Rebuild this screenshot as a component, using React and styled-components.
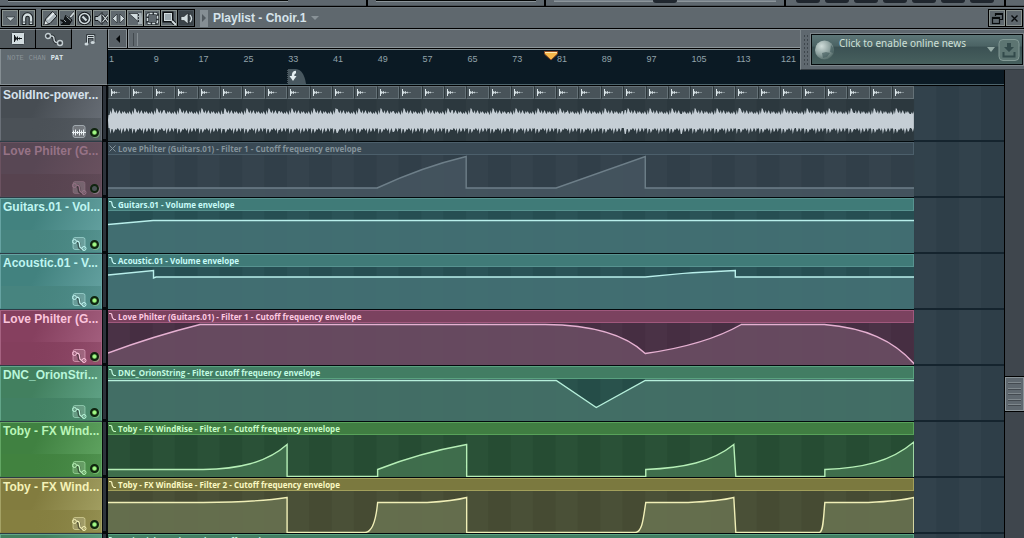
import React, { useState } from 'react'
import styled, { createGlobalStyle, css } from 'styled-components'

const GlobalStyle = createGlobalStyle`
* {
    box-sizing: border-box;
}
body {
    margin: 0;
    background: #2d3c46;
    overflow: hidden;
}
button {
    margin: 0;
    padding: 0;
    border: 0;
    background: none;
    color: inherit;
    font: inherit;
}
svg {
    display: block;
}
`

const Window = styled.div`
display: flex;
flex-direction: column;
height: 100vh;
overflow: hidden;
position: relative;
font-family: 'Liberation Sans', Arial, sans-serif;
`

const HostStrip = styled.div`
display: flex;
gap: 2px;
height: 7px;
flex: none;
background: #000;
border-bottom: 1px solid #000;
`

const HostPanel = styled.div`
flex: ${props => props.$grow} 1 0;
display: flex;
justify-content: space-around;
padding: 0 8px;
background: #5e676e;
border-bottom: 1px solid #4a5258;
`

const HostDisplay = styled.div`
flex: ${props => props.$grow || 1};
height: 2px;
background: ${props => props.$color || '#050808'};
border-bottom: 1px solid ${props => props.$edge || '#8b9499'};
`

const HostKey = styled.div`
width: 24px;
height: 3px;
border-radius: 0 0 4px 4px;
background: #20272f;
`

const Toolbar = styled.header`
display: flex;
align-items: center;
gap: 5px;
height: 22px;
flex: none;
padding: 0 1px;
background: #5f686e;
border-top: 1px solid #6b747a;
border-bottom: 1px solid #000;
`

const ButtonGroup = styled.div`
display: flex;
gap: 1px;
padding: 1px;
background: #000;
`

const ToolButton = styled.button`
display: grid;
place-content: center;
width: 16px;
height: 16px;
overflow: hidden;
background: ${props => (props.$active ? '#3b4349' : '#5f686e')};
border: 1px solid ${props => (props.$active ? '#4b545a' : '#89928f')};
`

const TitleButton = styled.button`
display: flex;
align-items: center;
gap: 5px;
flex: 1;
color: #d6e3ea;
font-size: 12px;
font-weight: 700;
line-height: 16px;
`

const TitleArrow = styled.span`
display: grid;
place-items: center;
width: 8px;
height: 17px;
background: #858e94;
`

const Main = styled.div`
display: flex;
flex: 1;
min-height: 0;
`

const Left = styled.div`
display: flex;
flex-direction: column;
flex: 1;
min-width: 0;
`

const NavRow = styled.div`
display: flex;
height: 20px;
flex: none;
background: #000;
`

const Tabs = styled.div`
display: flex;
width: 108px;
flex: none;
`

const Tab = styled.button`
display: grid;
place-items: center;
flex: 1;
background: ${props => (props.$active ? '#616a70' : '#51595e')};
border-top: 1px solid #899196;
border-right: 1px solid #000;
border-bottom: ${props => (props.$active ? '0' : '1px solid #000')};
`

const ScrollLeft = styled.button`
display: grid;
place-items: center;
width: 19px;
background: #5a6268;
border: 1px solid #8b9499;
margin-bottom: 1px;
`

const ScrollThumb = styled.div`
flex: 1;
margin: 0 0 1px 1px;
padding: 3px 4px;
background: #61696f;
border: 1px solid #8b9499;

&::before {
    content: '';
    display: block;
    width: 3px;
    height: 13px;
    border-left: 1px solid #42494e;
    border-right: 1px solid #858d92;
}
`

const RulerRow = styled.div`
display: flex;
height: 37px;
flex: none;
border-bottom: 1px solid #000;
`

const Modes = styled.div`
display: flex;
align-items: flex-start;
gap: 5px;
width: 108px;
flex: none;
padding: 5px 6px;
background: #616a70;
border-left: 1px solid #858e93;
border-right: 1px solid #000;
border-bottom: 1px solid #858e93;
`

const ModeButton = styled.button`
font-family: 'Liberation Mono', monospace;
font-size: 7px;
line-height: 9px;
font-weight: ${props => (props.$active ? 700 : 400)};
color: ${props => (props.$active ? '#dce6ea' : '#8b9499')};
`

const Ruler = styled.div`
display: grid;
grid-template-columns: repeat(20, 1fr);
flex: 1;
min-width: 0;
position: relative;
background: #0b1a24;
border-top: 1px solid #7d888d;
border-bottom: 1px solid #4d646c;
`

const BarNumber = styled.span`
padding: 3px 0 0 1px;
color: #92a3aa;
font-size: 9px;
line-height: 13px;
`

const Playhead = styled.svg`
position: absolute;
left: 49.4%;
top: 1px;
margin-left: -7px;
`

const LoopFlag = styled.svg`
position: absolute;
left: 20%;
bottom: 0;
`

const TrackList = styled.div`
flex: 1;
min-height: 0;
overflow: hidden;
`

const palettes = {
    gray: { from: '#474d53', to: '#6a7078', low: '#4b5157', text: '#d6e2ec', body: '#2d393f' },
    mute: { from: '#584754', to: '#6b5260', low: '#57434f', text: '#967386', head: '#394954', edge: '#4c5f6b', body: '#32404a', fill: '#44545f', line: '#6e7f89', label: '#84939b' },
    teal: { from: '#42827f', to: '#66a3a2', low: '#47847f', text: '#bff5f1', head: '#407b78', edge: '#579390', body: '#275054', fill: '#437073', line: '#b9efeb', label: '#c8fbf8' },
    pink: { from: '#86405f', to: '#a66281', low: '#843f5d', text: '#fbc4dc', head: '#7b425f', edge: '#a0587d', body: '#472f43', fill: '#684b61', line: '#e6b1d2', label: '#ffc9e2' },
    mint: { from: '#42805f', to: '#62a589', low: '#428063', text: '#b9f6da', head: '#427d63', edge: '#59a27f', body: '#264f49', fill: '#447067', line: '#b6efdb', label: '#c2fbe2' },
    green: { from: '#408141', to: '#62a663', low: '#41823f', text: '#b9f5b8', head: '#407d42', edge: '#58a25a', body: '#274e34', fill: '#41704e', line: '#b6efb7', label: '#c8fcc7' },
    olive: { from: '#827c3f', to: '#a5a265', low: '#857f40', text: '#f5f2b7', head: '#7b793f', edge: '#a3a05b', body: '#474d34', fill: '#66704f', line: '#f0efb7', label: '#fcf9c3' }
}

const stripes = css`
background-image: linear-gradient(90deg, rgba(255, 255, 255, 0.015) 50%, rgba(0, 0, 0, 0.02) 50%);
`

const TrackRow = styled.div`
display: flex;
height: 56px;
`

const TrackHead = styled.div`
display: flex;
flex-direction: column;
justify-content: space-between;
width: 102px;
height: 55px;
flex: none;
color: ${props => props.$p.text};
background:
    linear-gradient(90deg, ${props => props.$p.low} 30%, transparent 180%) 0 100% / 100% 22px no-repeat,
    linear-gradient(115deg, ${props => props.$p.from} 35%, ${props => props.$p.to});
border: 1px solid ${props => props.$p.to};
border-bottom-color: ${props => props.$p.from};
`

const TrackName = styled.div`
padding: 1px 2px;
font-size: 12px;
font-weight: 700;
line-height: 15px;
white-space: nowrap;
`

const TrackControls = styled.div`
display: flex;
align-items: center;
justify-content: flex-end;
gap: 3px;
padding: 0 2px;
`

const Led = styled.button`
width: 9px;
height: 9px;
border-radius: 50%;
border: 2px solid #10240f;
background: ${props => (props.$on ? 'radial-gradient(#a4f986 35%, #2f6b27 80%)' : '#4c5458')};
box-shadow: 1px 1px 0 ${props => (props.$on ? 'rgba(150, 230, 140, 0.45)' : 'rgba(190, 180, 190, 0.4)')};
`

const Divider = styled.div`
width: 6px;
flex: none;
background: #2d333b;
border: solid #06090c;
border-width: 0 2px 3px 1px;
`

const Lane = styled.div`
flex: 1;
min-width: 0;
background-color: #2f3f49;
${stripes}
background-size: 5% 100%;
border-bottom: 2px solid #15242e;
`

const Clip = styled.section`
width: 90%;
height: 56px;
background-color: ${props => props.$p.body};
${stripes}
background-size: 5.5556% 100%;
border-bottom: 1px solid #02090c;
`

const ClipHeader = styled.h2`
display: flex;
align-items: center;
gap: 1px;
height: 13px;
margin: 0;
padding-left: 1px;
overflow: hidden;
white-space: nowrap;
color: ${props => props.$p.label};
background-color: ${props => props.$p.head};
border: 1px solid ${props => props.$p.edge};
border-left: 0;
font-family: 'Open Sans', 'Noto Sans', sans-serif;
font-size: 8px;
font-weight: 700;
line-height: 11px;
`

const Slices = styled.div`
display: grid;
grid-template-columns: repeat(36, 1fr);
height: 13px;
`

const Slice = styled.div`
display: flex;
align-items: center;
background: #485359;
border: 1px solid #647177;
border-left-color: #2b3539;
padding-left: 1px;
`

const ClipBody = styled.svg`
width: 100%;
height: 42px;
`

const VerticalScroll = styled.div`
display: flex;
flex-direction: column;
width: 20px;
flex: none;
background: #3f464d;
border-left: 1px solid #000;
`

const ScrollSpace = styled.div`
flex: ${props => props.$grow} 1 0;
`

const VerticalThumb = styled.div`
display: flex;
flex-direction: column;
justify-content: space-between;
height: 34px;
flex: none;
padding: 4px 2px;
background: #5f686f;
border: 1px solid #899398;
outline: 1px solid #000;
`

const Ridge = styled.span`
height: 2px;
background: #434a50;
border-top: 1px solid #7f888d;
`

const NewsPanel = styled.aside`
position: absolute;
top: 29px;
right: 0;
display: flex;
gap: 3px;
width: 224px;
height: 41px;
padding: 4px 1px 4px 2px;
background: #5f686f;
border: 1px solid #7e878c;
border-right: 0;
border-bottom-color: #343c42;
`

const Grip = styled.div`
width: 5px;
background: radial-gradient(#3e464c 1px, transparent 1px) 0 0 / 3px 4px;
`

const NewsButton = styled.button`
display: flex;
align-items: center;
gap: 3px;
flex: 1;
padding: 0 2px;
color: #cfe0d8;
background: linear-gradient(#5d7677, #4b6364 38%, #3b5153 42%, #47605e);
border: 1px solid #05090b;
outline: 1px solid #7d868b;
`

const NewsText = styled.span`
flex: 1;
align-self: flex-start;
padding-top: 1px;
text-align: left;
font-family: 'Noto Sans', sans-serif;
font-size: 10px;
line-height: 14px;
white-space: nowrap;
`

const tracks = [
    { name: 'SolidInc-power...', palette: 'gray', audio: true },
    {
        name: 'Love Philter (G...',
        palette: 'mute',
        muted: true,
        clip: 'Love Philter (Guitars.01) - Filter 1 - Cutoff frequency envelope',
        path: 'M0 33H269Q314 12 358 1.5V33H448L537 1.5V33H806'
    },
    {
        name: 'Guitars.01 - Vol...',
        palette: 'teal',
        clip: 'Guitars.01 - Volume envelope',
        path: 'M0 13.5L45 9.5H806'
    },
    {
        name: 'Acoustic.01 - V...',
        palette: 'teal',
        clip: 'Acoustic.01 - Volume envelope',
        path: 'M0 8L45.5 3.5V11L48 10H537Q582 5 627 3.5V10H806'
    },
    {
        name: 'Love Philter (G...',
        palette: 'pink',
        clip: 'Love Philter (Guitars.01) - Filter 1 - Cutoff frequency envelope',
        path: 'M0 30Q46 13 92 1.5H437C490 2 520 14 537 30.5Q597 22 633 1.5H716C757 5 785 17 806 41'
    },
    {
        name: 'DNC_OrionStri...',
        palette: 'mint',
        clip: 'DNC_OrionString - Filter cutoff frequency envelope',
        path: 'M0 1.5H448L488 28.5L537 1.5H806'
    },
    {
        name: 'Toby - FX Wind...',
        palette: 'green',
        clip: 'Toby - FX WindRise - Filter 1 - Cutoff frequency envelope',
        path: 'M0 34.5H95C130 34 158 28 179 9.5V41.5H269.5V34.5Q311 18 358.5 9.5V41.5H537.5V34.5C575 33 604 27 625.5 9.5L627.5 41.5H716.5V34.5C754 33 782 27 805.5 7V42'
    },
    {
        name: 'Toby - FX Wind...',
        palette: 'olive',
        clip: 'Toby - FX WindRise - Filter 2 - Cutoff frequency envelope',
        path: 'M0 11.5H95Q150 11 179 6.5V41.5H257C264 41 268 28 269.5 11.5H319Q345 10 358.5 6.5V41.5H527C534 41 535 28 537.5 11.5H580Q612 10 625.5 6.5L627.5 41.5H711C715 41 715 28 716.5 11.5H760Q792 10 805.5 6.5V42'
    },
    {
        name: '',
        palette: 'mint',
        clip: 'Toxic Biohazard #2 - Flt Cutoff envelope',
        path: 'M0 20H806'
    }
]

const bars = Array.from({ length: 20 }, (_, i) => i * 8 + 1)

// peak heights of one half-bar loop, repeated along the audio clip
const peaksUp = [6, 11, 7, 13, 12, 9, 8, 11, 7, 9, 11, 8, 7, 10, 8, 10, 8, 7, 9, 7, 10, 8]
const peaksDown = [7, 13, 8, 8, 12, 10, 8, 9, 7, 8, 10, 7, 13, 9, 7, 11, 10, 7, 8, 11, 7, 8]

function wavePath() {
    let top = 'M0 21'
    let bottom = ''
    for (let x = 0; x < 806; x++) {
        const i = Math.floor((x % 22.39) * 0.98)
        top += `L${x + 0.5} ${22 - peaksUp[i]}`
        bottom = `L${x + 0.5} ${22 + peaksDown[i]}` + bottom
    }
    return top + bottom + 'Z'
}

function ToolIcon({ name }) {
    const light = '#d2dcdf'
    const shapes = {
        menu: <path d="M3 6h9L7.5 10z" fill={light} stroke="#22282c" strokeWidth=".6" />,
        magnet: (
            <>
                <path d="M4 14V7a3.5 3.5 0 0 1 7 0v7" fill="none" stroke="#1b2024" strokeWidth="4.5" />
                <path d="M4 13V7a3.5 3.5 0 0 1 7 0v6" fill="none" stroke={light} strokeWidth="2.4" />
                <path d="M2.5 11h3M9.5 11h3" stroke="#4b5459" />
            </>
        ),
        pencil: (
            <>
                <path d="M1 14l1.5-6L9.500.5l4.500 4.500L7 12.5z" fill="#aeb9be" stroke="#15191c" />
                <path d="M4.5 8.5l6.500-6.500" stroke="#eef4f5" strokeWidth="1.5" />
                <path d="M1 14l1.2-4.5 3.3 3.3z" fill="#eef4f5" stroke="#15191c" strokeWidth=".6" />
            </>
        ),
        brush: (
            <>
                <path d="M9 6l4.5-5.5 1.5 2L11 7z" fill={light} stroke="#15191c" strokeWidth=".6" />
                <path d="M5.5 4.5L12 9l-3 5-8-.5 3-1.5-3.500-3 3.5.5z" fill="#14181b" stroke="#0a0d0f" />
                <path d="M6.5 5.5l4.500 4M4 9l2 2" stroke="#9da8ad" />
            </>
        ),
        erase: (
            <>
                <circle cx="7.5" cy="7.5" r="5" fill="#32393e" stroke="#15191c" strokeWidth="3.4" />
                <circle cx="7.5" cy="7.5" r="5" fill="none" stroke={light} strokeWidth="1.6" />
                <path d="M5.5 5.5l4 4" stroke={light} strokeWidth="2.2" />
            </>
        ),
        mute: (
            <>
                <path d="M1 5.5h3l4-4v12l-4-4H1z" fill="#b7c2c7" stroke="#15191c" />
                <path d="M8.5 4l5.5 7M14 4l-5.5 7" stroke="#15191c" strokeWidth="2.8" />
                <path d="M8.5 4l5.5 7M14 4l-5.5 7" stroke={light} strokeWidth="1.2" />
            </>
        ),
        slip: <path d="M6 3v9L1.5 7.5zM9 3v9l4.5-4.5z" fill={light} stroke="#22282c" strokeWidth=".7" />,
        slice: (
            <>
                <path d="M1 2.5h9v8z" fill={light} stroke="#22282c" strokeWidth=".7" />
                <path d="M10 2h3.5l1 11-4.5.5z" fill="#a5afb3" />
                <path d="M10.5 3v9" stroke="#293035" strokeDasharray="2 1" />
            </>
        ),
        select: (
            <>
                <rect x="2.5" y="2.5" width="10" height="10" rx="2" fill="none" stroke="#2b3236" strokeWidth="3" />
                <rect x="2.5" y="2.5" width="10" height="10" rx="2" fill="none" stroke={light} strokeWidth="1.5" strokeDasharray="3 1.5" />
            </>
        ),
        zoom: (
            <>
                <path d="M9.5 9.5l4.5 4.5" stroke="#15191c" strokeWidth="4" />
                <rect x="1.5" y="1.5" width="9" height="9" fill="#9eabb1" stroke="#0d1012" strokeWidth="2" />
                <rect x="2.5" y="2.5" width="7" height="7" fill="none" stroke={light} />
                <path d="M10 10l4 4" stroke={light} strokeWidth="2" />
            </>
        ),
        play: (
            <>
                <path d="M2 5.5h3L9 2v11L5 9.5H2z" fill={light} stroke="#15191c" strokeWidth=".6" />
                <path d="M11 4q3 3.5 0 7" fill="none" stroke={light} strokeWidth="1.3" />
            </>
        ),
        restore: (
            <>
                <path d="M5.5 5V2.5h7v6H10" fill="none" stroke="#080b0d" strokeWidth="1.2" />
                <path d="M5 3h8" stroke="#080b0d" strokeWidth="2" />
                <rect x="2.5" y="6.5" width="7" height="6" fill="none" stroke="#080b0d" strokeWidth="1.2" />
                <path d="M2 7h8" stroke="#080b0d" strokeWidth="2" />
            </>
        ),
        close: <path d="M4.5 4.5l6 6M10.5 4.5l-6 6" stroke="#080b0d" strokeWidth="1.4" />
    }
    return <svg width="15" height="15" viewBox="0 0 15 15">{shapes[name]}</svg>
}

function EnvelopeIcon() {
    return (
        <svg width="16" height="16" viewBox="0 0 16 16" fill="none" stroke="currentColor">
            <rect x="2" y="1.5" width="12" height="12" rx="2" fill="rgba(255,255,255,.16)" strokeOpacity=".5" />
            <path d="M5 5.5q3 0 3 3.5t3 4" stroke="rgba(0,0,0,.45)" strokeWidth="3" />
            <circle cx="3.5" cy="5.5" r="2" />
            <circle cx="13" cy="12.5" r="2" />
            <path d="M5.5 5q3 0 3 3.5t2.5 4" strokeWidth="1.3" />
        </svg>
    )
}

function AudioIcon() {
    return (
        <svg width="16" height="16" viewBox="0 0 16 16" fill="none" stroke="#edf3f6">
            <rect x="2" y="1.5" width="12" height="12" rx="2" fill="rgba(255,255,255,.2)" stroke="#a0a8ae" />
            <path d="M1 8.5h14M2.5 6.5v4M4.5 5.5v6M6.5 7v3M8.5 5.5v6M10.5 6.5v4M12.5 5.5v6" />
        </svg>
    )
}

function SliceIcon() {
    return (
        <svg width="12" height="11" viewBox="0 0 12 11" stroke="#dbe6e9">
            <path d="M1.5 2v7" />
            <path d="M2.5 4v3M4.5 4v3" strokeOpacity=".75" />
            <path d="M3.5 4.5v2M6.5 4.5v2" strokeOpacity=".4" />
            <path d="M2 5.5h5" strokeOpacity=".7" />
            <path d="M7 5.5h3" strokeOpacity=".35" />
        </svg>
    )
}

function TabIcon({ name }) {
    if (name === 'audio') {
        return (
            <svg width="14" height="14" viewBox="0 0 14 14">
                <rect x=".5" y=".5" width="13" height="12" rx="1" fill="#d3dde0" stroke="#3d454a" />
                <path d="M3.5 3v7M4.5 4.5v4M6.5 4.5v4M5.5 5.5v2M8.5 5.5v2M3 6.5h8" stroke="#14191c" />
            </svg>
        )
    }
    if (name === 'automation') {
        return (
            <svg width="20" height="15" viewBox="0 0 20 15" fill="none">
                <path d="M4.5 4h3q2.5 0 2.5 3t2.5 3.5h3" stroke="#24292d" strokeWidth="3" />
                <path d="M4.5 4h3q2.5 0 2.5 3t2.5 3.5h3" stroke="#c3cdd1" strokeWidth="1.4" />
                <circle cx="4" cy="4" r="2.5" fill="#343b40" stroke="#c3cdd1" strokeWidth="1.4" />
                <circle cx="16" cy="11" r="2.5" fill="#343b40" stroke="#c3cdd1" strokeWidth="1.4" />
            </svg>
        )
    }
    return (
        <svg width="14" height="14" viewBox="0 0 14 14">
            <path d="M4.5 10.5V2.5H11V9M4.5 4.5H11" stroke="#262c30" strokeWidth="2.5" fill="none" />
            <path d="M4.5 10.5V2.5H11V9M4.5 4.5H11" stroke="#ccd6da" fill="none" />
            <ellipse cx="3.5" cy="11" rx="2" ry="1.5" fill="#ccd6da" />
            <ellipse cx="9.7" cy="9.5" rx="2" ry="1.5" fill="#ccd6da" />
        </svg>
    )
}

function ClipMark({ muted }) {
    return (
        <svg width="8" height="11" viewBox="0 0 8 11" fill="none" stroke="currentColor">
            {muted
                ? <path d="M.5 2.5l6 6M6.5 2.5l-6 6" />
                : <path d="M0 2.5h1.5Q3 2.5 3 5t2 3.5h2" strokeWidth="1.2" />}
        </svg>
    )
}

function AudioClip({ palette }) {
    return (
        <Clip $p={palette}>
            <Slices>
                {Array.from({ length: 36 }, (_, i) => <Slice key={i}><SliceIcon /></Slice>)}
            </Slices>
            <ClipBody viewBox="0 0 806 42" preserveAspectRatio="none">
                <path d={wavePath()} fill="#c5ced5" />
            </ClipBody>
        </Clip>
    )
}

function AutomationClip({ track, palette }) {
    return (
        <Clip $p={palette}>
            <ClipHeader $p={palette}>
                <ClipMark muted={track.muted} />
                {track.clip}
            </ClipHeader>
            <ClipBody viewBox="0 0 806 42" preserveAspectRatio="none">
                <path d={`${track.path}V42H0Z`} fill={palette.fill} fillOpacity=".94" />
                <path d={track.path} fill="none" stroke={palette.line} strokeWidth="1.4" vectorEffect="non-scaling-stroke" />
            </ClipBody>
        </Clip>
    )
}

function PlaylistTrack({ track }) {
    const palette = palettes[track.palette]
    const [on, setOn] = useState(!track.muted)

    return (
        <TrackRow>
            <TrackHead $p={palette}>
                <TrackName>{track.name}</TrackName>
                <TrackControls>
                    {track.audio ? <AudioIcon /> : <EnvelopeIcon />}
                    <Led $on={on} aria-label="Mute track" aria-pressed={!on} onClick={() => setOn(!on)} />
                </TrackControls>
            </TrackHead>
            <Divider />
            <Lane>
                {track.audio
                    ? <AudioClip palette={palette} />
                    : <AutomationClip track={track} palette={palette} />}
            </Lane>
        </TrackRow>
    )
}

function News() {
    return (
        <NewsPanel>
            <Grip />
            <NewsButton>
                <svg width="22" height="24" viewBox="0 0 22 24">
                    <defs>
                        <radialGradient id="globe" cx=".35" cy=".3" r=".75">
                            <stop offset="0" stopColor="#d0ddda" />
                            <stop offset=".6" stopColor="#8ca09e" />
                            <stop offset="1" stopColor="#526967" />
                        </radialGradient>
                    </defs>
                    <circle cx="10.5" cy="12" r="9.5" fill="url(#globe)" />
                    <path d="M17 7q4 4 2 8l-3-1zM8 15l4-1 4 1-3 4-4 1z" fill="#40595a" opacity=".6" />
                </svg>
                <NewsText>Click to enable online news</NewsText>
                <svg width="8" height="5" viewBox="0 0 8 5"><path d="M0 0h8L4 5z" fill="#94aaa5" /></svg>
                <svg width="22" height="24" viewBox="0 0 22 24">
                    <rect x="1" y="1.5" width="20" height="21" rx="4" fill="#5d7572" stroke="#829995" />
                    <path d="M9 5h4v4h3l-5 5-5-5h3z" fill="#334a4b" />
                    <path d="M5.5 14v4.5h11V14" fill="none" stroke="#334a4b" strokeWidth="2" />
                </svg>
            </NewsButton>
        </NewsPanel>
    )
}

const tools = ['pencil', 'brush', 'erase', 'mute', 'slip', 'slice', 'select', 'zoom', 'play']
const modes = ['NOTE', 'CHAN', 'PAT']

function App() {
    const [mode, setMode] = useState('PAT')
    const [tool, setTool] = useState('play')

    return (
        <>
            <GlobalStyle />
            <Window>
                <HostStrip>
                    <HostPanel $grow={375}><HostDisplay $grow={4} /><HostDisplay $color="#5e676e" $edge="#5e676e" /></HostPanel>
                    <HostPanel $grow={171}><HostDisplay /></HostPanel>
                    <HostPanel $grow={238}><HostDisplay $color="#78828a" /><HostKey /><HostDisplay $color="#78828a" /></HostPanel>
                    <HostPanel $grow={217}>{modes.concat(tools.slice(0, 4)).map(key => <HostKey key={key} />)}</HostPanel>
                    <HostPanel $grow={2} />
                </HostStrip>
                <Toolbar>
                    <ButtonGroup>
                        <ToolButton aria-label="Menu"><ToolIcon name="menu" /></ToolButton>
                        <ToolButton aria-label="Snap"><ToolIcon name="magnet" /></ToolButton>
                    </ButtonGroup>
                    <ButtonGroup>
                        {tools.map(name => (
                            <ToolButton key={name} aria-label={name} $active={tool === name} onClick={() => setTool(name)}>
                                <ToolIcon name={name} />
                            </ToolButton>
                        ))}
                    </ButtonGroup>
                    <TitleButton>
                        <TitleArrow><svg width="4" height="8" viewBox="0 0 4 8"><path d="M0 0v8l4-4z" fill="#525a60" /></svg></TitleArrow>
                        Playlist - Choir.1
                        <svg width="8" height="4" viewBox="0 0 8 4"><path d="M0 0h8L4 4z" fill="#899297" /></svg>
                    </TitleButton>
                    <ButtonGroup>
                        <ToolButton aria-label="Restore"><ToolIcon name="restore" /></ToolButton>
                        <ToolButton aria-label="Close"><ToolIcon name="close" /></ToolButton>
                    </ButtonGroup>
                </Toolbar>
                <Main>
                    <Left>
                        <NavRow>
                            <Tabs>
                                <Tab aria-label="Audio clips"><TabIcon name="audio" /></Tab>
                                <Tab aria-label="Automation clips"><TabIcon name="automation" /></Tab>
                                <Tab aria-label="Patterns" $active><TabIcon name="notes" /></Tab>
                            </Tabs>
                            <ScrollLeft aria-label="Scroll left">
                                <svg width="4" height="8" viewBox="0 0 4 8"><path d="M4 0v8L0 4z" fill="#05080a" /></svg>
                            </ScrollLeft>
                            <ScrollThumb />
                        </NavRow>
                        <RulerRow>
                            <Modes>
                                {modes.map(name => (
                                    <ModeButton key={name} $active={mode === name} onClick={() => setMode(name)}>{name}</ModeButton>
                                ))}
                            </Modes>
                            <Ruler>
                                {bars.map(bar => <BarNumber key={bar}>{bar}</BarNumber>)}
                                <Playhead width="14" height="10" viewBox="0 0 14 10">
                                    <path d="M.5.5h13V3L7 9 .5 3z" fill="#f6b84a" stroke="#8e4a24" />
                                    <path d="M1 1.5h12" stroke="#ffe9b0" />
                                </Playhead>
                                <LoopFlag width="20" height="15" viewBox="0 0 20 15">
                                    <path d="M0 0h9q8 1 10 15H0z" fill="#48575f" />
                                    <path d="M.5 0v15" stroke="#101b22" strokeDasharray="1 1" />
                                    <path d="M9 3q-3 0-3 4" fill="none" stroke="#e4eef1" strokeWidth="2.5" />
                                    <path d="M2.5 7h7L6 12z" fill="#e4eef1" />
                                </LoopFlag>
                            </Ruler>
                        </RulerRow>
                        <TrackList>
                            {tracks.map((track, i) => <PlaylistTrack key={i} track={track} />)}
                        </TrackList>
                    </Left>
                    <VerticalScroll>
                        <ScrollSpace $grow={348} />
                        <VerticalThumb><Ridge /><Ridge /><Ridge /><Ridge /><Ridge /></VerticalThumb>
                        <ScrollSpace $grow={127} />
                    </VerticalScroll>
                </Main>
                <News />
            </Window>
        </>
    )
}

export default App
